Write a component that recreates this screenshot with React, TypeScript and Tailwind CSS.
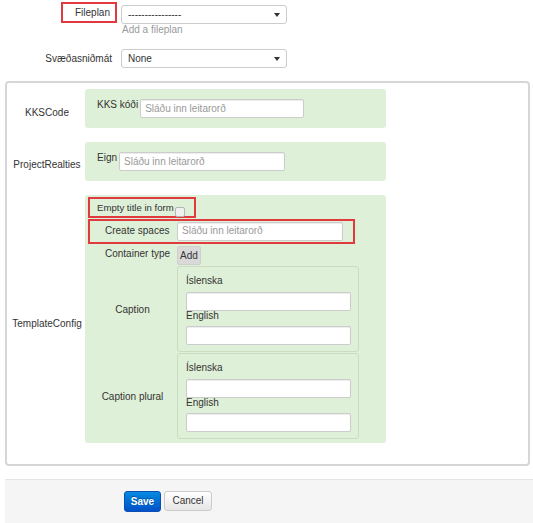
import React from "react";

const font = { fontFamily: '"Liberation Sans", Arial, sans-serif' };

function Select({ value }: { value: string }) {
  return (
    <div className="w-[166px] h-[19px] bg-white border border-[#cccccc] rounded-[3px] flex items-center justify-between pl-[6px] pr-[6px] text-[#333]">
      <span>{value}</span>
      <svg width="6" height="4" viewBox="0 0 6 4"><path d="M0 0 L6 0 L3 4 Z" fill="#333" /></svg>
    </div>
  );
}

function Input({ w, placeholder }: { w: string; placeholder?: string }) {
  return (
    <div className={`${w} h-[19px] bg-white border border-[#cccccc] rounded-[2px] shadow-[inset_0_1px_1px_rgba(0,0,0,0.075)] flex items-center pl-[4px] text-[#999]`}>
      {placeholder}
    </div>
  );
}

function Group({ label }: { label: string }) {
  return (
    <div className="flex items-center">
      <div className="w-[89px] text-center pt-[2px]">{label}</div>
      <div className="w-[182px] h-[86px] border border-[#cbdcc2] rounded-[3px] px-[8px] pt-[8px]">
        <div className="leading-[12px]">Íslenska</div>
        <div className="mt-[5px]"><Input w="w-[165px]" /></div>
        <div className="leading-[12px] mt-[-1px]">English</div>
        <div className="mt-[4px]"><Input w="w-[165px]" /></div>
      </div>
    </div>
  );
}

export default function App() {
  return (
    <div className="w-[533px] h-[523px] bg-white text-[10px] leading-[12px] text-[#333] relative overflow-hidden" style={font}>
      {/* Top form */}
      <div className="flex items-start h-[36px]">
        <div className="w-[117px] flex justify-end">
          <div className="mt-[2px] h-[21px] border-2 border-[#e03a3e] pl-[12px] pr-[5px] flex items-center">Fileplan</div>
        </div>
        <div className="ml-[4px] mt-[5px]">
          <Select value="----------------" />
          <div className="text-[#999] leading-[12px] pl-[1px]">Add a fileplan</div>
        </div>
      </div>
      <div className="flex items-center mt-[13px]">
        <div className="w-[112px] text-right">Svæðasniðmát</div>
        <div className="ml-[9px]"><Select value="None" /></div>
      </div>

      {/* Panel */}
      <div className="ml-[5px] mt-[13px] w-[525px] h-[385px] border-2 border-[#d6d6d6] rounded-[4px] pt-[6px]">
        <div className="flex items-center">
          <div className="w-[80px] text-center pt-[9px]">KKSCode</div>
          <div className="ml-[-2px] w-[301px] h-[39px] bg-[#dff0d8] rounded-[3px] flex items-start pt-[10px] pl-[12px]">
            <div className="leading-[12px]">KKS kóði</div>
            <div className="ml-[2px]"><Input w="w-[164px]" placeholder="Sláðu inn leitarorð" /></div>
          </div>
        </div>
        <div className="flex items-center mt-[14px]">
          <div className="w-[80px] text-center pt-[7px]">ProjectRealties</div>
          <div className="ml-[-2px] w-[301px] h-[39px] bg-[#dff0d8] rounded-[3px] flex items-start pt-[10px] pl-[12px]">
            <div className="leading-[12px]">Eign</div>
            <div className="ml-[2px]"><Input w="w-[166px]" placeholder="Sláðu inn leitarorð" /></div>
          </div>
        </div>
        <div className="flex items-center mt-[14px]">
          <div className="w-[80px] text-center pt-[10px]">TemplateConfig</div>
          <div className="ml-[-2px] w-[301px] h-[248px] bg-[#dff0d8] rounded-[3px] pt-[2px] pl-[3px] pb-[5px]">
            <div className="w-[108px] h-[21px] border-2 border-[#e03a3e] flex items-center pl-[7px]">
              <span className="text-[9.6px] whitespace-nowrap">Empty title in form</span>
              <span className="ml-[1px] mt-[8px] w-[10px] h-[10px] shrink-0 border border-[#b5b5b5] rounded-[2px] bg-[#f0f0f0] inline-block"></span>
            </div>
            <div className="mt-[1px] w-[267px] h-[25px] border-2 border-[#e03a3e] flex items-center">
              <div className="w-[87px] pl-[15px] pb-[2px]">Create spaces</div>
              <div className="mt-[-1px]"><Input w="w-[166px]" placeholder="Sláðu inn leitarorð" /></div>
            </div>
            <div className="flex items-start mt-[2px]">
              <div className="w-[89px] pl-[17px] pt-[2px]">Container type</div>
              <div className="w-[24px] h-[19px] bg-[#d9d9d9] rounded-[2px] border border-[#cfcfcf] flex items-center justify-center text-[#333]">Add</div>
            </div>
            <div className="mt-[1px] flex flex-col gap-[1px]">
              <Group label="Caption" />
              <Group label="Caption plural" />
            </div>
          </div>
        </div>
      </div>

      {/* Footer */}
      <div className="ml-[5px] mt-[13px] w-[528px] h-[50px] bg-[#f5f5f5] border-t border-[#e5e5e5] flex items-start pt-[11px] pl-[119px] gap-[3px]">
        <button className="w-[37px] h-[21px] rounded-[3px] border border-[#0b4fb5] bg-gradient-to-b from-[#0a8ae0] to-[#0450c8] text-white font-bold [text-shadow:0_-1px_0_rgba(0,0,0,0.3)]">Save</button>
        <button className="w-[48px] h-[20px] rounded-[3px] border border-[#cccccc] bg-gradient-to-b from-white to-[#e6e6e6] text-[#333] shadow-[inset_0_1px_0_rgba(255,255,255,0.2)]">Cancel</button>
      </div>
    </div>
  );
}
